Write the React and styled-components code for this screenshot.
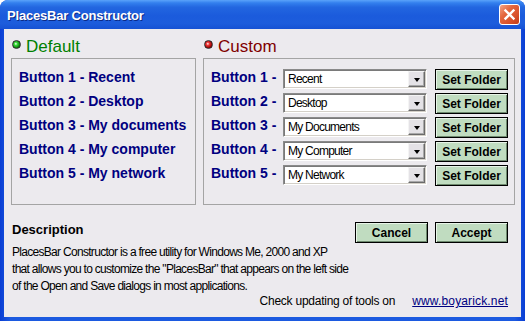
import React from "react";
import styled, { createGlobalStyle } from "styled-components";

const GlobalStyle = createGlobalStyle`
  html, body {
    margin: 0;
    padding: 0;
    background: #ffffff;
  }
  body {
    font-family: "Liberation Sans", Arial, sans-serif;
    -webkit-font-smoothing: none;
  }
`;

const Window = styled.div`
  width: 525px;
  height: 321px;
  display: flex;
  flex-direction: column;
  border-radius: 8px 8px 0 0;
  overflow: hidden;
  background: linear-gradient(to right, #0a3ed4 0%, #1c5ae0 2%, #1c5ae0 98%, #0a3ed4 100%);
`;

const TitleBar = styled.div`
  height: 29px;
  flex: none;
  display: flex;
  align-items: center;
  justify-content: space-between;
  padding: 0 5px 0 7px;
  background: linear-gradient(
    to bottom,
    #5aa3fa 0%,
    #3380ee 10%,
    #2266e0 25%,
    #1b5bdc 55%,
    #1d5ddc 80%,
    #1652d4 100%
  );
`;

const Title = styled.span`
  color: #ffffff;
  font-weight: bold;
  font-size: 13px;
  letter-spacing: -0.2px;
  text-shadow: 1px 1px 0 #0b2a86;
  padding-top: 2px;
`;

const CloseButton = styled.div`
  width: 21px;
  height: 21px;
  box-sizing: border-box;
  border: 1px solid #ffffff;
  border-radius: 3px;
  background: linear-gradient(135deg, #f4a488 0%, #e4683f 35%, #d8502a 70%, #c23c18 100%);
  display: flex;
  align-items: center;
  justify-content: center;
`;

const Body = styled.div`
  flex: 1;
  margin: 0 4px 4px 4px;
  background: #eceaee;
  display: flex;
  flex-direction: column;
`;

const Panels = styled.div`
  display: flex;
  gap: 7px;
  padding: 0 6px 0 7px;
`;

const Panel = styled.div`
  width: ${(p) => p.$width}px;
  display: flex;
  flex-direction: column;
`;

const PanelHeader = styled.div`
  height: 29px;
  box-sizing: border-box;
  padding: 5px 0 0 1px;
  display: flex;
  align-items: center;
  gap: 5px;
  font-size: 17px;
  line-height: 17px;
  color: ${(p) => p.$color};
`;

const Bullet = styled.span`
  width: 9px;
  height: 9px;
  box-sizing: border-box;
  margin-top: -3px;
  border-radius: 50%;
  border: 1.5px solid #2e2e2e;
  background: radial-gradient(
    circle at 40% 40%,
    #ffffff 0px,
    ${(p) => p.$light} 1.5px,
    ${(p) => p.$dark} 4px
  );
`;

const GroupBox = styled.div`
  height: 147px;
  box-sizing: border-box;
  border: 1px solid #a4a4a4;
  padding: ${(p) => p.$padTop}px 0 0 7px;
  display: flex;
  flex-direction: column;
`;

const DefaultItem = styled.div`
  height: 24px;
  line-height: 24px;
  font-size: 14px;
  font-weight: bold;
  color: #000080;
  white-space: nowrap;
`;

const CustomRow = styled.div`
  height: 24px;
  display: flex;
  align-items: flex-start;
`;

const RowLabel = styled.span`
  width: 72px;
  line-height: 20px;
  font-size: 14px;
  font-weight: bold;
  color: #000080;
  white-space: nowrap;
`;

const Combo = styled.div`
  width: 144px;
  height: 20px;
  margin-top: 2px;
  box-sizing: border-box;
  background: #ffffff;
  border: 1px solid;
  border-color: #8a8a8a #ffffff #ffffff #8a8a8a;
  box-shadow: inset 1px 1px 0 #7a7a7a, inset -1px -1px 0 #d4d0c8;
  display: flex;
  align-items: center;
  justify-content: space-between;
  padding: 1px 1px 1px 4px;
`;

const ComboText = styled.span`
  font-size: 12px;
  letter-spacing: -0.75px;
  color: #000000;
  white-space: nowrap;
`;

const ComboArrow = styled.span`
  width: 17px;
  height: 16px;
  box-sizing: border-box;
  background: #e4e2e6;
  border: 1px solid;
  border-color: #f4f4f4 #6a6a6a #6a6a6a #f4f4f4;
  box-shadow: inset -1px -1px 0 #a8a8a8;
  display: flex;
  align-items: center;
  justify-content: center;

  &::after {
    content: "";
    border-left: 3.5px solid transparent;
    border-right: 3.5px solid transparent;
    border-top: 4px solid #000000;
    margin-top: 1px;
  }
`;

const GreenButton = styled.div`
  width: 73px;
  height: 21px;
  box-sizing: border-box;
  margin-left: ${(p) => p.$ml || 0}px;
  margin-top: ${(p) => p.$mt || 0}px;
  border: 1px solid #000000;
  background: #c0dcc0;
  box-shadow: inset 1px 1px 0 #e8f4e8, inset -1px -1px 0 #6e8a6e;
  display: flex;
  align-items: center;
  justify-content: center;
  font-size: 12px;
  font-weight: bold;
  color: #000000;
  white-space: nowrap;
`;

const Bottom = styled.div`
  flex: 1;
  display: flex;
  flex-direction: column;
  padding: 17px 13px 0 8px;
`;

const TopRow = styled.div`
  display: flex;
  justify-content: space-between;
  align-items: flex-start;
  height: 21px;
`;

const Heading = styled.span`
  font-size: 13px;
  line-height: 16px;
  font-weight: bold;
  color: #000000;
`;

const ButtonGroup = styled.div`
  display: flex;
  gap: 7px;
`;

const Paragraph = styled.p`
  margin: 1px 0 0 0;
  font-size: 12px;
  line-height: 17px;
  letter-spacing: -0.7px;
  color: #000000;
  white-space: nowrap;
`;

const Footer = styled.div`
  display: flex;
  justify-content: flex-end;
  gap: 17px;
  font-size: 12px;
  line-height: 13px;
  color: #000000;
  white-space: nowrap;
`;

const FooterText = styled.span`
  letter-spacing: -0.25px;
`;

const Link = styled.a`
  color: #000080;
  text-decoration: underline;
  letter-spacing: 0.15px;
`;

const defaults = [
  "Button 1 - Recent",
  "Button 2 - Desktop",
  "Button 3 - My documents",
  "Button 4 - My computer",
  "Button 5 - My network",
];

const customs = ["Recent", "Desktop", "My Documents", "My Computer", "My Network"];

const App = () => {
  return (
    <>
      <GlobalStyle />
      <Window>
        <TitleBar>
          <Title>PlacesBar Constructor</Title>
          <CloseButton>
            <svg width="13" height="13" viewBox="0 0 13 13">
              <path
                d="M2.5 2.5 L10.5 10.5 M10.5 2.5 L2.5 10.5"
                stroke="#ffffff"
                strokeWidth="2.4"
                strokeLinecap="square"
              />
            </svg>
          </CloseButton>
        </TitleBar>
        <Body>
          <Panels>
            <Panel $width={185}>
              <PanelHeader $color="#008000">
                <Bullet $light="#3cdc3c" $dark="#0a800a" />
                Default
              </PanelHeader>
              <GroupBox $padTop={6}>
                {defaults.map((text) => (
                  <DefaultItem key={text}>{text}</DefaultItem>
                ))}
              </GroupBox>
            </Panel>
            <Panel $width={312}>
              <PanelHeader $color="#800000">
                <Bullet $light="#f03a3a" $dark="#980000" />
                Custom
              </PanelHeader>
              <GroupBox $padTop={8}>
                {customs.map((value, index) => (
                  <CustomRow key={value}>
                    <RowLabel>Button {index + 1} -</RowLabel>
                    <Combo>
                      <ComboText>{value}</ComboText>
                      <ComboArrow />
                    </Combo>
                    <GreenButton $ml={8} $mt={2}>
                      Set Folder
                    </GreenButton>
                  </CustomRow>
                ))}
              </GroupBox>
            </Panel>
          </Panels>
          <Bottom>
            <TopRow>
              <Heading>Description</Heading>
              <ButtonGroup>
                <GreenButton>Cancel</GreenButton>
                <GreenButton>Accept</GreenButton>
              </ButtonGroup>
            </TopRow>
            <Paragraph>
              PlacesBar Constructor is a free utility for Windows Me, 2000 and XP
              <br />
              that allows you to customize the "PlacesBar" that appears on the left side
              <br />
              of the Open and Save dialogs in most applications.
            </Paragraph>
            <Footer>
              <FooterText>Check updating of tools on</FooterText>
              <Link href="#">www.boyarick.net</Link>
            </Footer>
          </Bottom>
        </Body>
      </Window>
    </>
  );
};

export default App;
